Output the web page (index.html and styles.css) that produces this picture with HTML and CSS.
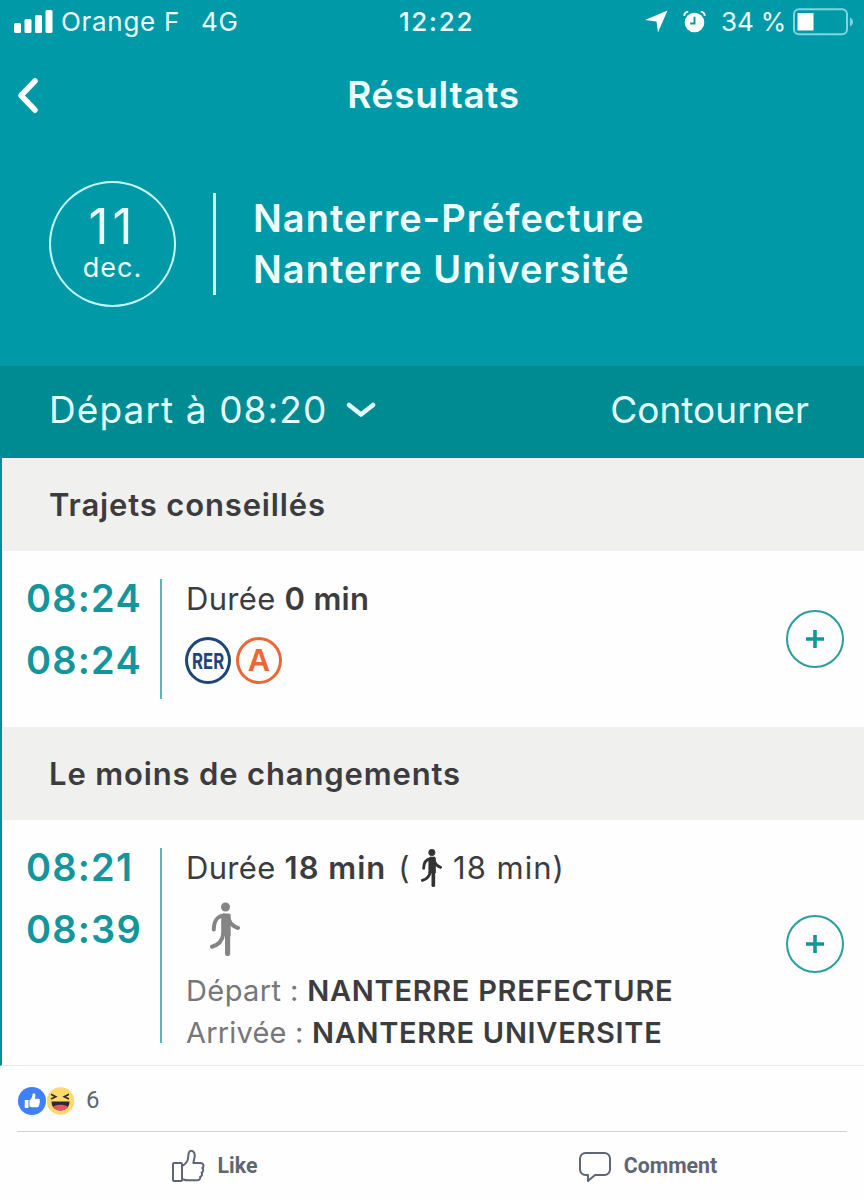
FILE: index.html
```
<!DOCTYPE html>
<html lang="fr">
<head>
    <meta charset="UTF-8">
    <meta name="viewport" content="width=device-width, initial-scale=1.0">
    <title>Résultats</title>
    <link rel="stylesheet" href="styles.css">
</head>
<body>
<svg class="sprite" width="0" height="0">
    <symbol id="walker" viewBox="0 0 30 54">
        <circle cx="15.500" cy="5" r="4.500" fill="currentColor"/>
        <path d="M13 11.500h5.500c1.500 0 2.200.8 2.200 2.200V34h-9.500V14z" fill="currentColor"/>
        <path d="M14 13.600C6.500 14.500 4 19 3.800 27.500M19 18c2 4.500 5 6.800 9 8M13.300 32c-1 7.500-5 11-11.300 12.700" fill="none" stroke="currentColor" stroke-width="4" stroke-linecap="round"/>
        <path d="M17.600 32v19.500" fill="none" stroke="currentColor" stroke-width="5.200" stroke-linecap="round"/>
    </symbol>
</svg>
<div class="phone">
    <header>
        <div class="status">
            <div class="status-left">
                <svg class="signal" width="40" height="24" viewBox="0 0 40 24" fill="#fff">
                    <rect x="0" y="13" width="7" height="10" rx="1.500"/>
                    <rect x="10.500" y="9" width="7" height="14" rx="1.500"/>
                    <rect x="21" y="5" width="7" height="18" rx="1.500"/>
                    <rect x="31.500" y="0" width="7" height="23" rx="1.500"/>
                </svg>
                <span class="carrier">Orange F</span>
                <span class="network">4G</span>
            </div>
            <div class="clock">12:22</div>
            <div class="status-right">
                <svg class="location" width="23" height="23" viewBox="0 0 24 24" fill="#fff"><path d="M23.500 0.500 13.500 23.500 12 12 0 10.500z"/></svg>
                <svg class="alarm" width="23" height="24" viewBox="0 0 24 24">
                    <circle cx="12" cy="12.500" r="10.200" fill="#fff"/>
                    <path d="M12 6.500v7H7.500" fill="none" stroke="#0099a8" stroke-width="2"/>
                    <path d="M1.200 5.500C1.500 3 3 1.500 5.500 1.200M22.800 5.500C22.500 3 21 1.500 18.500 1.200" fill="none" stroke="#fff" stroke-width="2"/>
                </svg>
                <span class="percent">34 %</span>
                <svg class="battery" width="61" height="28" viewBox="0 0 61 28">
                    <rect x="1" y="1.200" width="53" height="25" rx="5" fill="none" stroke="#7fd6de" stroke-width="2"/>
                    <rect x="4.500" y="5" width="16" height="17.500" fill="#fff"/>
                    <path d="M57 9.500c4 2 4 7 0 9z" fill="#7fd6de"/>
                </svg>
            </div>
        </div>
        <div class="nav">
            <svg class="back" width="22" height="38" viewBox="0 0 22 38"><path d="M18 5 4 19.500 18 34" fill="none" stroke="#fff" stroke-width="5.500" stroke-linecap="round" stroke-linejoin="round"/></svg>
            <h1>Résultats</h1>
        </div>
        <div class="trip">
            <div class="date">
                <span class="day">11</span>
                <span class="month">dec.</span>
            </div>
            <div class="stations">
                <p class="from">Nanterre-Préfecture</p>
                <p class="to">Nanterre Université</p>
            </div>
        </div>
    </header>
    <div class="options">
        <span class="departure">Départ à 08:20</span>
        <svg class="chevron" width="30" height="18" viewBox="0 0 30 18"><path d="M3 5 15 14.500 27 5" fill="none" stroke="#e4ffff" stroke-width="4.500" stroke-linecap="round" stroke-linejoin="round"/></svg>
        <span class="avoid">Contourner</span>
    </div>
    <h2 class="advised">Trajets conseillés</h2>
    <div class="route">
        <div class="times">
            <span>08:24</span>
            <span>08:24</span>
        </div>
        <div class="details">
            <p class="duration">Durée <b>0 min</b></p>
            <div class="lines">
                <span class="line rer"><span>RER</span></span>
                <span class="line line-a">A</span>
            </div>
        </div>
        <div class="add"><svg width="20" height="20" viewBox="0 0 20 20"><path d="M10 1v18M1 10h18" stroke="#12959b" stroke-width="3.600"/></svg></div>
    </div>
    <h2 class="fewest">Le moins de changements</h2>
    <div class="route route-walk">
        <div class="times">
            <span>08:21</span>
            <span>08:39</span>
        </div>
        <div class="details">
            <p class="duration">Durée <b class="long">18 min</b> <span class="walk-time">( <svg class="walker-small"><use href="#walker"/></svg> 18 min)</span></p>
            <svg class="walker-big"><use href="#walker"/></svg>
            <p class="stop stop-from">Départ : <b>NANTERRE PREFECTURE</b></p>
            <p class="stop">Arrivée : <b>NANTERRE UNIVERSITE</b></p>
        </div>
        <div class="add"><svg width="20" height="20" viewBox="0 0 20 20"><path d="M10 1v18M1 10h18" stroke="#12959b" stroke-width="3.600"/></svg></div>
    </div>
</div>
<footer>
    <div class="reactions">
        <svg width="28" height="28" viewBox="0 0 28 28">
            <circle cx="14" cy="14" r="14" fill="#4080ff"/>
            <path d="M6.800 13h3.700v8H7.500a.8.8 0 0 1-.8-.8zM11.500 13.200c2-1.200 2.700-3 2.900-5.200.1-1.200.5-1.700 1.200-1.700 1.500 0 2 1.400 1.800 3l-.5 2.500h3.400c1.700 0 2 1.500 1.200 2.300.7.700.5 1.700-.1 2.200.3.800.1 1.600-.6 2 .2 1-.3 2-1.600 2h-4.500c-1.500 0-2.300-.3-3.200-.8z" fill="#fff"/>
        </svg>
        <svg class="haha" width="28" height="28" viewBox="0 0 28 28">
            <circle cx="13.500" cy="14" r="13.800" fill="#ffd96b"/>
            <path d="m4 7.300 4.800 2.500L4 12M22 7.300l-4.800 2.500L22 12" fill="none" stroke="#2b2b33" stroke-width="1.600"/>
            <path d="M4.500 14.500h18c0 5.500-3.500 9-9 9s-9-3.500-9-9z" fill="#2b2b33"/>
            <path d="M6.200 19.500c4-2.500 10.500-2.500 14.600 0-1.300 2.800-4 4-7.300 4s-6-1.200-7.300-4z" fill="#f0506a"/>
        </svg>
        <span class="count">6</span>
    </div>
    <div class="actions">
        <div class="action">
            <svg class="like-icon" width="34" height="34" viewBox="0 0 34 34" fill="none" stroke="#5f6673" stroke-width="2" stroke-linejoin="round">
                <rect x="2" y="14" width="9" height="18" rx="1"/>
                <path d="M11 17c4-2 6-5 6.200-9 .1-3.500.6-6.200 3-6.200 3 0 4 3.500 3.300 6.800L22.300 14h7c3.500 0 4 3.500 2 5 1.500 1.500 1 4-.7 4.700 1 1.600.2 3.600-1.400 4.100.3 2-1 3.500-3.200 3.500H16.500c-2.500 0-3.500-.7-5.500-1.300"/>
            </svg>
            <span>Like</span>
        </div>
        <div class="action">
            <svg class="comment-icon" width="32" height="32" viewBox="0 0 32 32" fill="none" stroke="#5f6673" stroke-width="2" stroke-linejoin="round">
                <path d="M6.500 3h19A5.500 5.500 0 0 1 31 8.500v11a5.500 5.500 0 0 1-5.500 5.500H16l-7 6v-6H6.500A5.500 5.500 0 0 1 1 19.500v-11A5.500 5.500 0 0 1 6.500 3z"/>
            </svg>
            <span>Comment</span>
        </div>
    </div>
</footer>
</body>
</html>
```
FILE: styles.css
```
* {
    box-sizing: border-box;
}
body {
    font-family: 'Inter', sans-serif;
    margin: 0;
    background: #fefefe;
    color: #3c3c3e;
}
h1, h2, p {
    margin: 0;
}
b {
    font-weight: 600;
}
svg {
    display: block;
    flex-shrink: 0;
}
.sprite {
    position: absolute;
}
.phone {
    height: 1066px;
    border-left: 2px solid #078f97;
    border-bottom: 1px solid #e6e6e8;
    white-space: nowrap;
}
header {
    height: 366px;
    margin-left: -2px;
    background: #0099a8;
    color: #edffff;
}
.status {
    display: grid;
    grid-template-columns: 1fr auto 1fr;
    align-items: center;
    height: 43px;
    padding: 0 10px 0 14px;
    font-size: 26px;
}
.status-left,
.status-right {
    display: flex;
    align-items: center;
}
.status-right {
    justify-content: flex-end;
}
.carrier {
    margin-left: 7px;
    letter-spacing: 0.7px;
}
.network {
    margin-left: 21px;
    letter-spacing: 0.8px;
}
.clock {
    padding-left: 5px;
    font-weight: 500;
    letter-spacing: 1.7px;
}
.alarm {
    margin: 0 15px;
}
.percent {
    letter-spacing: -0.2px;
}
.battery {
    margin-left: 7px;
}
.nav {
    display: grid;
    grid-template-columns: 60px 1fr 60px;
    align-items: center;
    height: 104px;
}
.back {
    margin-left: 17px;
}
h1 {
    padding: 0 0 2px 3px;
    font-size: 37px;
    font-weight: 600;
    text-align: center;
    letter-spacing: 0.7px;
}
.trip {
    display: flex;
    align-items: center;
    padding: 34px 0 0 49px;
}
.date {
    display: flex;
    flex-direction: column;
    align-items: center;
    width: 127px;
    height: 126px;
    padding-top: 19px;
    border: 2px solid #c8fbff;
    border-radius: 50%;
}
.day {
    font-size: 49px;
    line-height: 49px;
    letter-spacing: 4px;
}
.month {
    font-size: 27px;
    line-height: 33px;
    letter-spacing: 1px;
}
.stations {
    margin-left: 37px;
    padding-left: 37px;
    border-left: 3px solid #dcffff;
    font-size: 38px;
    font-weight: 600;
    line-height: 51px;
    letter-spacing: 1px;
}
.options {
    display: flex;
    align-items: center;
    height: 92px;
    margin-left: -2px;
    padding: 3px 55px 9px 49px;
    background: #008b93;
    color: #e4ffff;
    font-size: 37px;
    font-weight: 400;
}
.departure {
    letter-spacing: 1.1px;
}
.chevron {
    margin-left: 19px;
}
.avoid {
    margin-left: auto;
}
h2 {
    height: 93px;
    padding-left: 47px;
    background: #f0f0ef;
    font-size: 31px;
    font-weight: 600;
    line-height: 93px;
    letter-spacing: 0.85px;
}
.route {
    display: flex;
    height: 176px;
    padding: 16px 20px 0 24px;
}
.route-walk {
    height: 245px;
}
.times {
    display: flex;
    flex-direction: column;
    width: 134px;
    color: #12959b;
    font-size: 38px;
    font-weight: 600;
    line-height: 62px;
    letter-spacing: 1.2px;
}
.details {
    flex: 1;
    height: 120px;
    margin-top: 12px;
    padding-left: 24px;
    border-left: 2px solid #5bb5b2;
}
.route-walk .details {
    height: 195px;
}
.duration {
    font-size: 31px;
    font-weight: 400;
    line-height: 39px;
    letter-spacing: 0.3px;
}
.duration .long {
    letter-spacing: 1px;
}
.walk-time {
    margin-left: 3px;
    letter-spacing: 1px;
}
.lines {
    display: flex;
    gap: 5px;
    margin-top: 19px;
}
.line {
    display: flex;
    align-items: center;
    justify-content: center;
    width: 46px;
    height: 47px;
    margin-left: -1px;
    border: 3px solid #1b4677;
    border-radius: 50%;
    color: #1b4677;
    font-weight: 700;
}
.line-a {
    margin-left: 0;
    border-color: #ea6736;
    color: #ea6736;
    font-family: 'Liberation Sans', sans-serif;
    font-size: 31px;
}
.rer {
    font-size: 22px;
}
.rer span {
    transform: scaleX(0.76);
}
.add {
    display: flex;
    align-items: center;
    justify-content: center;
    width: 58px;
    height: 58px;
    margin-top: 43px;
    border: 2px solid #2c9d9d;
    border-radius: 50%;
}
.route-walk .add {
    margin-top: 79px;
}
.walker-small {
    display: inline-block;
    width: 23px;
    height: 38px;
    vertical-align: -8px;
    color: #333;
    stroke: currentColor;
}
.walker-big {
    width: 30px;
    height: 54px;
    margin: 15px 0 14px 24px;
    color: #858585;
}
.stop {
    color: #77777a;
    font-size: 29px;
    line-height: 42px;
    letter-spacing: 0.2px;
}
.stop-from {
    letter-spacing: 0.4px;
}
.stop b {
    color: #3c3c3e;
    letter-spacing: 0.7px;
}
footer {
    color: #5f6673;
    font-family: 'Roboto', sans-serif;
}
.reactions {
    display: flex;
    align-items: center;
    height: 66px;
    margin: 0 17px;
    padding: 4px 0 0 1px;
    border-bottom: 1px solid #d2d3d6;
}
.haha {
    margin-left: 1px;
}
.count {
    margin: -2px 0 0 11px;
    font-size: 24px;
}
.actions {
    display: grid;
    grid-template-columns: 1fr 1fr;
    height: 67px;
    font-size: 21.3px;
    font-weight: 700;
}
.action {
    display: flex;
    align-items: center;
    justify-content: center;
    gap: 13px;
    padding-right: 4px;
}
.action + .action {
    padding-right: 0;
}
```
